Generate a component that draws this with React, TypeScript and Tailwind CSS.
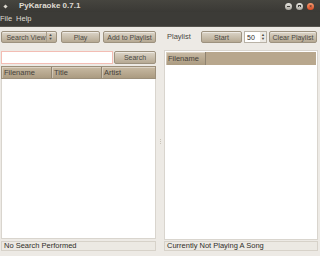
import React from "react";

const btn =
  "flex items-center justify-center rounded-[2px] border border-[#9d927f] bg-gradient-to-b from-[#dcd5c8] to-[#b6a993] text-[#4a4843] shadow-[inset_0_1px_0_rgba(255,255,255,0.5)]";

const headCell =
  "flex items-center border-r border-[#8f8370] bg-gradient-to-b from-[#c8baa3] to-[#ab9b81] px-[2px] text-[7.5px] text-[#45413a] shadow-[inset_1px_1px_0_rgba(255,255,255,0.35)]";

function TitleBar() {
  return (
    <div className="flex h-[12px] items-center bg-gradient-to-b from-[#46453f] to-[#3a3935] pl-[4px] pr-[6px]">
      <div className="h-[3px] w-[3px] rotate-45 bg-[#dcd8cf]" />
      <span className="ml-[12px] text-[8px] font-bold leading-none text-[#dfdbd2]">PyKaraoke 0.7.1</span>
      <div className="ml-auto flex items-center gap-[4px]">
        <div className="flex h-[7px] w-[7px] items-center justify-center rounded-full bg-gradient-to-b from-[#e8e6e0] to-[#a9a69e]">
          <div className="h-[1px] w-[3px] bg-[#3c3b37]" />
        </div>
        <div className="flex h-[7px] w-[7px] items-center justify-center rounded-full bg-gradient-to-b from-[#e8e6e0] to-[#a9a69e]">
          <div className="h-[2px] w-[3px] border-x border-t border-[#3c3b37]" />
        </div>
        <div className="flex h-[7px] w-[7px] items-center justify-center rounded-full bg-gradient-to-b from-[#f59a6f] to-[#d8481f] text-[5px] leading-none text-[#4a2416]">
          ×
        </div>
      </div>
    </div>
  );
}

function MenuBar() {
  return (
    <div className="flex h-[15px] items-center gap-[4px] border-b border-[#56544e] bg-[#3c3b37] text-[7.5px] leading-none text-[#dfdbd2]">
      <span>File</span>
      <span>Help</span>
    </div>
  );
}

function StatusBox({ text }: { text: string }) {
  return (
    <div className="flex h-[10px] items-center border border-[#d7d2c9] bg-[#ece9e3] px-[2px] text-[7.5px] leading-none text-[#2f2d29]">
      {text}
    </div>
  );
}

function SearchPane() {
  return (
    <div className="flex w-[155px] flex-col">
      <div className="mt-[4px] flex h-[12px]">
        <div className={btn + " w-[56px] justify-between pl-[3px] pr-[2px]"}>
          <span>Search View</span>
          <div className="flex h-full items-center border-l border-[#a99d89] pl-[2px]">
            <div className="flex flex-col items-center text-[4px] leading-[4px] text-[#4a4843]">
              <span>▲</span>
              <span>▼</span>
            </div>
          </div>
        </div>
        <div className={btn + " ml-[4px] w-[39px]"}>Play</div>
        <div className={btn + " ml-[3px] w-[53px]"}>Add to Playlist</div>
      </div>
      <div className="mt-[8px] flex h-[13px]">
        <div className="w-[112px] border border-[#f3bdb4] bg-white" />
        <div className={btn + " ml-[1px] w-[42px]"}>Search</div>
      </div>
      <div className="mt-[2px] flex h-[13px] border border-[#9c8f7a]">
        <div className={headCell + " w-[50px]"}>Filename</div>
        <div className={headCell + " w-[50px]"}>Title</div>
        <div className={headCell + " flex-1 border-r-0"}>Artist</div>
      </div>
      <div className="h-[160px] border-x border-b border-[#d9d5ce] bg-white" />
      <div className="mt-[2px]">
        <StatusBox text="No Search Performed" />
      </div>
    </div>
  );
}

function PlaylistPane() {
  return (
    <div className="flex w-[154px] flex-col">
      <div className="mt-[4px] flex h-[12px] items-center">
        <span className="ml-[3px] w-[34px] text-[7.5px] text-[#4a4843]">Playlist</span>
        <div className={btn + " h-full w-[41px]"}>Start</div>
        <div className="ml-[2px] flex h-full w-[23px] items-center border border-[#b9b2a6] bg-white pl-[2px]">
          <span className="text-[#2f2d29]">50</span>
          <div className="ml-auto flex h-full flex-col items-center justify-center bg-[#ece9e3] px-[1px] text-[4px] leading-[4px] text-[#4a4843]">
            <span>▲</span>
            <span>▼</span>
          </div>
        </div>
        <div className={btn + " ml-[2px] h-full w-[48px]"}>Clear Playlist</div>
      </div>
      <div className="mt-[7px] flex h-[190px] flex-col border border-[#d9d5ce] bg-white p-[1px]">
        <div className="flex h-[13px] bg-[#b8a78d]">
          <div className={headCell + " w-[40px]"}>Filename</div>
        </div>
      </div>
      <div className="mt-[1px]">
        <StatusBox text="Currently Not Playing A Song" />
      </div>
    </div>
  );
}

export default function App() {
  return (
    <div
      className="flex h-[256px] w-[320px] flex-col overflow-hidden bg-[#edeae5] text-[7px] leading-none"
      style={{ fontFamily: '"Liberation Sans", Arial, sans-serif' }}
    >
      <TitleBar />
      <MenuBar />
      <div className="flex flex-1 pl-[1px]">
        <SearchPane />
        <div className="flex w-[8px] items-center justify-center">
          <div className="flex flex-col gap-[1px]">
            <div className="h-[1px] w-[1px] bg-[#c9c3b8]" />
            <div className="h-[1px] w-[1px] bg-[#c9c3b8]" />
            <div className="h-[1px] w-[1px] bg-[#c9c3b8]" />
          </div>
        </div>
        <PlaylistPane />
      </div>
    </div>
  );
}
